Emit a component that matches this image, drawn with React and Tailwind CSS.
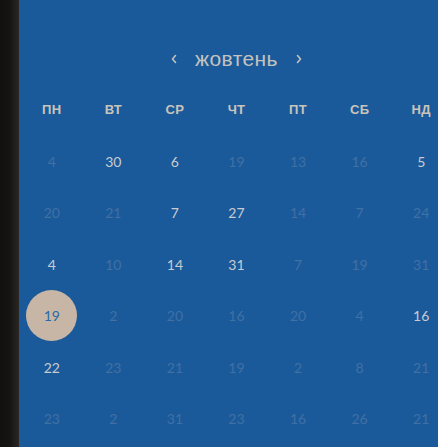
import React from 'react';

const weekdays = ['ПН', 'ВТ', 'СР', 'ЧТ', 'ПТ', 'СБ', 'НД'];

// [day, state] 0 = other month, 1 = this month, 2 = selected
const rows = [
  [[4, 0], [30, 1], [6, 1], [19, 0], [13, 0], [16, 0], [5, 1]],
  [[20, 0], [21, 0], [7, 1], [27, 1], [14, 0], [7, 0], [24, 0]],
  [[4, 1], [10, 0], [14, 1], [31, 1], [7, 0], [19, 0], [31, 0]],
  [[19, 2], [2, 0], [20, 0], [16, 0], [20, 0], [4, 0], [16, 1]],
  [[22, 1], [23, 0], [21, 0], [19, 0], [2, 0], [8, 0], [21, 0]],
  [[23, 0], [2, 0], [31, 0], [23, 0], [16, 0], [26, 0], [21, 0]],
];

const Chevron = ({ dir }) => (
  <svg width="8" height="10" viewBox="0 0 8 10" fill="none">
    <path
      d={dir === 'left' ? 'M5.5 1.5 L2.5 5 L5.5 8.5' : 'M2.5 1.5 L5.5 5 L2.5 8.5'}
      stroke="#c4c2bd"
      strokeWidth="1.6"
      strokeLinecap="round"
      strokeLinejoin="round"
    />
  </svg>
);

export default function App() {
  return (
    <div className="flex h-[447px] w-[438px] overflow-hidden bg-[#1b5a9a]" style={{ fontFamily: 'Lato, "Noto Sans", sans-serif' }}>
      <div className="w-[19px] shrink-0 bg-gradient-to-r from-[#121110] via-[#161412] to-[#2a2724]" />
      <div className="flex-1 overflow-hidden">
        <div className="w-[433px] shrink-0 pl-[2px] pt-[37px]">
          {/* month switcher */}
          <div className="flex h-[44px] items-center justify-center gap-[17px]">
            <Chevron dir="left" />
            <span className="text-[21px] tracking-[0.4px] text-[#c4c2bd]" style={{ fontFamily: '"Liberation Sans", Arial, sans-serif' }}>
              жовтень
            </span>
            <Chevron dir="right" />
          </div>

          {/* weekday names */}
          <div className="mt-[3px] grid h-[51.5px] grid-cols-7 items-center">
            {weekdays.map((d) => (
              <div key={d} className="text-center text-[13px] font-bold tracking-[0.3px] text-[#c9c4bb]" style={{ fontFamily: '"Liberation Sans", Arial, sans-serif' }}>
                {d}
              </div>
            ))}
          </div>

          {/* days */}
          {rows.map((row, i) => (
            <div key={i} className="grid h-[51.5px] grid-cols-7 items-center">
              {row.map(([day, state], j) => (
                <div key={j} className="flex justify-center">
                  {state === 2 ? (
                    <div className="flex h-[51px] w-[51px] items-center justify-center rounded-full bg-[#c7b6a5] text-[14px] text-[#2a6aa8]">
                      {day}
                    </div>
                  ) : (
                    <span className={state ? 'text-[14px] text-[#c8cbd0]' : 'text-[14px] text-[#4070a4]'}>
                      {day}
                    </span>
                  )}
                </div>
              ))}
            </div>
          ))}
        </div>
      </div>
    </div>
  );
}
